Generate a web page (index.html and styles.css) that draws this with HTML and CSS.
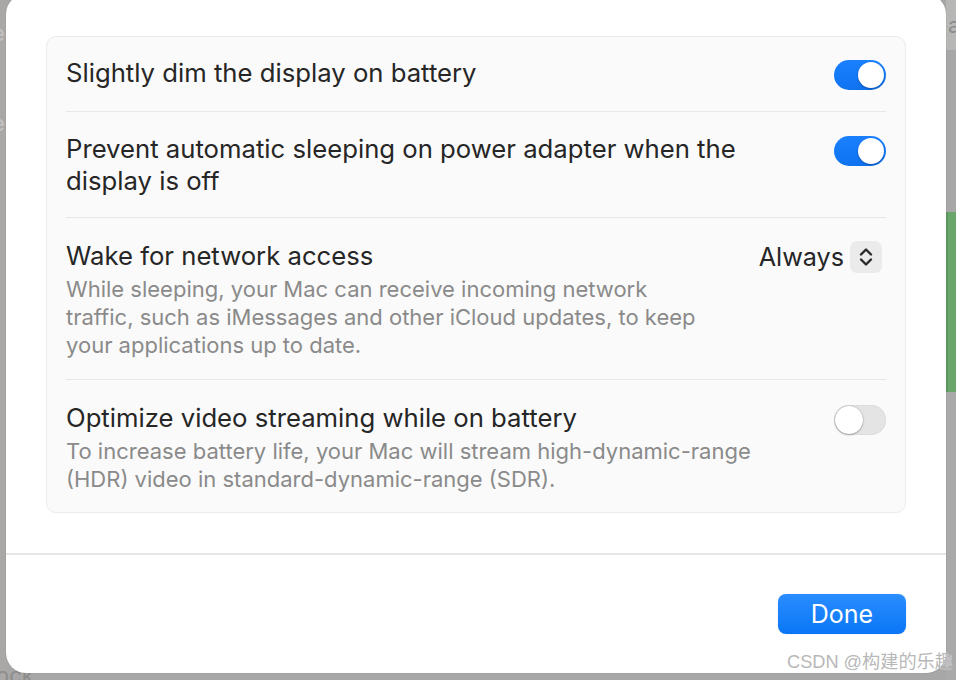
FILE: index.html
```html
<!DOCTYPE html>
<html>
<head>
<meta charset="utf-8">
<link rel="stylesheet" href="styles.css">
</head>
<body>
<div class="screen">
  <div class="side-left">
    <span class="bg-char c1">e</span>
    <span class="bg-char c2">e</span>
    <span class="bg-char c3">ock</span>
  </div>
  <div class="dialog">
    <div class="content">
      <div class="card">
        <div class="row first">
          <div class="text">
            <div class="title">Slightly dim the display on battery</div>
          </div>
          <div class="toggle on"><span class="knob"></span></div>
        </div>
        <div class="sep"></div>
        <div class="row">
          <div class="text">
            <div class="title">Prevent automatic sleeping on power adapter when the display is off</div>
          </div>
          <div class="toggle on"><span class="knob"></span></div>
        </div>
        <div class="sep"></div>
        <div class="row tall">
          <div class="text narrow">
            <div class="title">Wake for network access</div>
            <div class="desc">While sleeping, your Mac can receive incoming network traffic, such as iMessages and other iCloud updates, to keep your applications up to date.</div>
          </div>
          <div class="popup">
            <span class="popup-label">Always</span>
            <span class="stepper">
              <svg width="18" height="22" viewBox="0 0 18 22"><path d="M4 8.5 L9 3.5 L14 8.5" fill="none" stroke="#2a2a2a" stroke-width="2.4" stroke-linecap="round" stroke-linejoin="round"/><path d="M4 13.5 L9 18.5 L14 13.5" fill="none" stroke="#2a2a2a" stroke-width="2.4" stroke-linecap="round" stroke-linejoin="round"/></svg>
            </span>
          </div>
        </div>
        <div class="sep"></div>
        <div class="row tall last">
          <div class="text">
            <div class="title">Optimize video streaming while on battery</div>
            <div class="desc">To increase battery life, your Mac will stream high-dynamic-range (HDR) video in standard-dynamic-range (SDR).</div>
          </div>
          <div class="toggle off"><span class="knob"></span></div>
        </div>
      </div>
    </div>
    <div class="divider"></div>
    <div class="footer">
      <button class="done">Done</button>
    </div>
  </div>
  <div class="side-right">
    <div class="sr-top"><span class="bg-char c4">a</span></div>
    <div class="sr-mid"></div>
    <div class="sr-green"></div>
    <div class="sr-bot"></div>
  </div>
  <div class="watermark">CSDN @构建的乐趣</div>
</div>
</body>
</html>
```
FILE: styles.css
```css
html, body {
  margin: 0;
  padding: 0;
}
body {
  width: 956px;
  height: 680px;
  overflow: hidden;
  background: #a7a7a7;
  font-family: Inter, "Noto Sans", "Liberation Sans", sans-serif;
}
.screen {
  position: relative;
  display: flex;
  width: 956px;
  height: 680px;
  overflow: hidden;
}
.side-left {
  position: relative;
  width: 6px;
  flex: none;
  background: #a9a8a6;
}
.bg-char {
  position: absolute;
  color: #c4c3c1;
  font-size: 22px;
  line-height: 22px;
}
.c1 { left: -8px; top: 22px; }
.c2 { left: -8px; top: 112px; }
.c3 { left: -4px; top: 664px; color: #8e8d8b; }
.c4 { left: 2px; top: 14px; color: #8c8c8c; }
.dialog {
  width: 940px;
  height: 679px;
  margin-top: -6px;
  flex: none;
  background: #ffffff;
  border-radius: 20px;
  display: flex;
  flex-direction: column;
  box-shadow: 0 0 1px rgba(0,0,0,0.35);
  position: relative;
  z-index: 1;
}
.content {
  padding: 42px 40px 0 40px;
}
.card {
  background: #fafafa;
  border: 1px solid #ebebeb;
  border-radius: 10px;
  padding: 0 19px;
}
.row {
  display: flex;
  justify-content: space-between;
  align-items: flex-start;
  padding: 21px 0 20px 0;
}
.row.first {
  padding: 20px 0 21px 0;
}
.row.tall {
  padding: 22px 0 20px 0;
}
.row.last {
  padding-bottom: 19px;
}
.text {
  flex: 1;
  max-width: 720px;
}
.text.narrow {
  max-width: 648px;
}
.title {
  font-size: 25.7px;
  line-height: 32px;
  color: #262626;
}
.desc {
  margin-top: 3px;
  font-size: 22px;
  line-height: 28px;
  color: #8a8a8a;
}
.sep {
  height: 1px;
  background: #e8e8e8;
}
.toggle {
  position: relative;
  width: 52px;
  height: 30px;
  border-radius: 15px;
  margin-top: 3px;
  flex: none;
  box-sizing: border-box;
}
.toggle.on {
  background: linear-gradient(#1a80ff, #0f73f0);
}
.toggle.off {
  background: #e4e4e4;
  box-shadow: inset 0 0 0 1px #dcdcdc;
}
.knob {
  position: absolute;
  top: 2px;
  width: 26px;
  height: 26px;
  border-radius: 50%;
  background: #ffffff;
  box-shadow: 0 1px 2px rgba(0,0,0,0.3);
}
.toggle.on .knob { right: 2px; }
.toggle.off .knob { left: 1px; top: 1px; width: 28px; height: 28px; box-shadow: 0 0 1px rgba(0,0,0,0.4), 0 1px 2px rgba(0,0,0,0.25); }
.popup {
  display: flex;
  align-items: center;
  gap: 6px;
  margin-top: 0;
  margin-right: 4px;
  flex: none;
}
.popup-label {
  font-size: 25.2px;
  line-height: 32px;
  color: #262626;
}
.stepper {
  width: 32px;
  height: 32px;
  margin-top: 1px;
  border-radius: 7px;
  background: #ebebeb;
  display: flex;
  align-items: center;
  justify-content: center;
}
.stepper svg { display: block; }
.divider {
  margin-top: 40px;
  height: 2px;
  background: #e6e6e6;
}
.footer {
  flex: 1;
  display: flex;
  justify-content: flex-end;
  align-items: flex-end;
  padding: 0 40px 39px 0;
}
.done {
  width: 128px;
  height: 40px;
  border: none;
  border-radius: 8px;
  background: linear-gradient(#2a8dff, #0a76f6);
  color: #ffffff;
  font-family: Inter, "Noto Sans", "Liberation Sans", sans-serif;
  font-size: 25px;
  padding: 0;
  box-shadow: 0 0 1px rgba(0,80,200,0.4);
}
.side-right {
  width: 10px;
  flex: none;
  display: flex;
  flex-direction: column;
  position: relative;
}
.sr-top { position: relative; height: 50px; background: #b7b7b6; }
.sr-mid { height: 162px; background: #a7a7a7; }
.sr-green {
  height: 180px;
  background: #6aa66c;
  border-left: 2px solid #5e9a60;
  box-sizing: border-box;
}
.sr-bot { flex: 1; background: #a9a9a9; }
.watermark {
  position: absolute;
  right: 3px;
  bottom: 7px;
  z-index: 2;
  font-family: "Liberation Sans", "Noto Sans CJK SC", sans-serif;
  font-size: 18.2px;
  color: #b8b8b8;
  text-shadow: 0 0 1px rgba(255,255,255,0.9);
  white-space: nowrap;
}
```
